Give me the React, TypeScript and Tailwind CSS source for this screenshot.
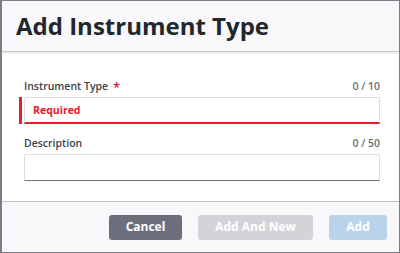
import React from 'react'

// Add Instrument Type dialog
function Field({
  label,
  count,
  required,
  error,
}: {
  label: string
  count: string
  required?: boolean
  error?: string
}) {
  return (
    <div className="flex flex-col ml-[22px] mr-[19px]">
      <div className="flex items-center justify-between h-[20px]">
        <div className="flex items-center gap-[5px] text-[10.5px] font-semibold text-[#3d4249]">
          <span>{label}</span>
          {required && <span className="text-[#e0202f] text-[13px] leading-none">*</span>}
        </div>
        <span className="text-[10.5px] font-semibold text-[#6b6f75]">{count}</span>
      </div>
      <div className="relative">
        {error && <div className="absolute -left-[5px] top-0 bottom-0 w-[3px] bg-[#e0202f]" />}
        <div
          className={`h-[27px] rounded-t-[2px] border border-[#dcdde0] bg-white flex items-center px-[8px] ${
            error ? 'border-b-2 border-b-[#e0202f] pt-[2px]' : 'border-b-[#6d7075]'
          }`}
        >
          {error && <span className="text-[10.5px] font-bold text-[#e0202f]">{error}</span>}
        </div>
      </div>
    </div>
  )
}

export default function App() {
  return (
    <div
      className="w-[400px] h-[253px] flex flex-col bg-white border border-[#7a7d84] border-l-2 overflow-hidden"
      style={{ fontFamily: '"Open Sans", sans-serif' }}
    >
      {/* Header */}
      <div className="h-[51px] shrink-0 flex items-center px-[14px] bg-[#f8f8fa] border-b border-[#c6c7cc] shadow-[0_1px_2px_rgba(0,0,0,0.12)]">
        <h1 className="text-[24px] font-bold text-[#23272c]">Add Instrument Type</h1>
      </div>

      {/* Body */}
      <div className="flex-1 flex flex-col gap-[10px] pt-[25px]">
        <Field label="Instrument Type" count="0 / 10" required error="Required" />
        <Field label="Description" count="0 / 50" />
      </div>

      {/* Footer */}
      <div className="h-[51px] shrink-0 flex items-center justify-end gap-4 pr-[12px] bg-[#f8f8fa] border-t border-[#b9bbc0]">
        <button className="h-[25px] w-[73px] rounded-[3px] bg-[#6b6f7b] text-white text-[12px] font-bold">
          Cancel
        </button>
        <button className="h-[25px] w-[115px] rounded-[3px] bg-[#d3d4d8] text-white text-[12px] font-bold">
          Add And New
        </button>
        <button className="h-[25px] w-[58px] rounded-[3px] bg-[#b8d3ea] text-white text-[12px] font-bold">
          Add
        </button>
      </div>
    </div>
  )
}
